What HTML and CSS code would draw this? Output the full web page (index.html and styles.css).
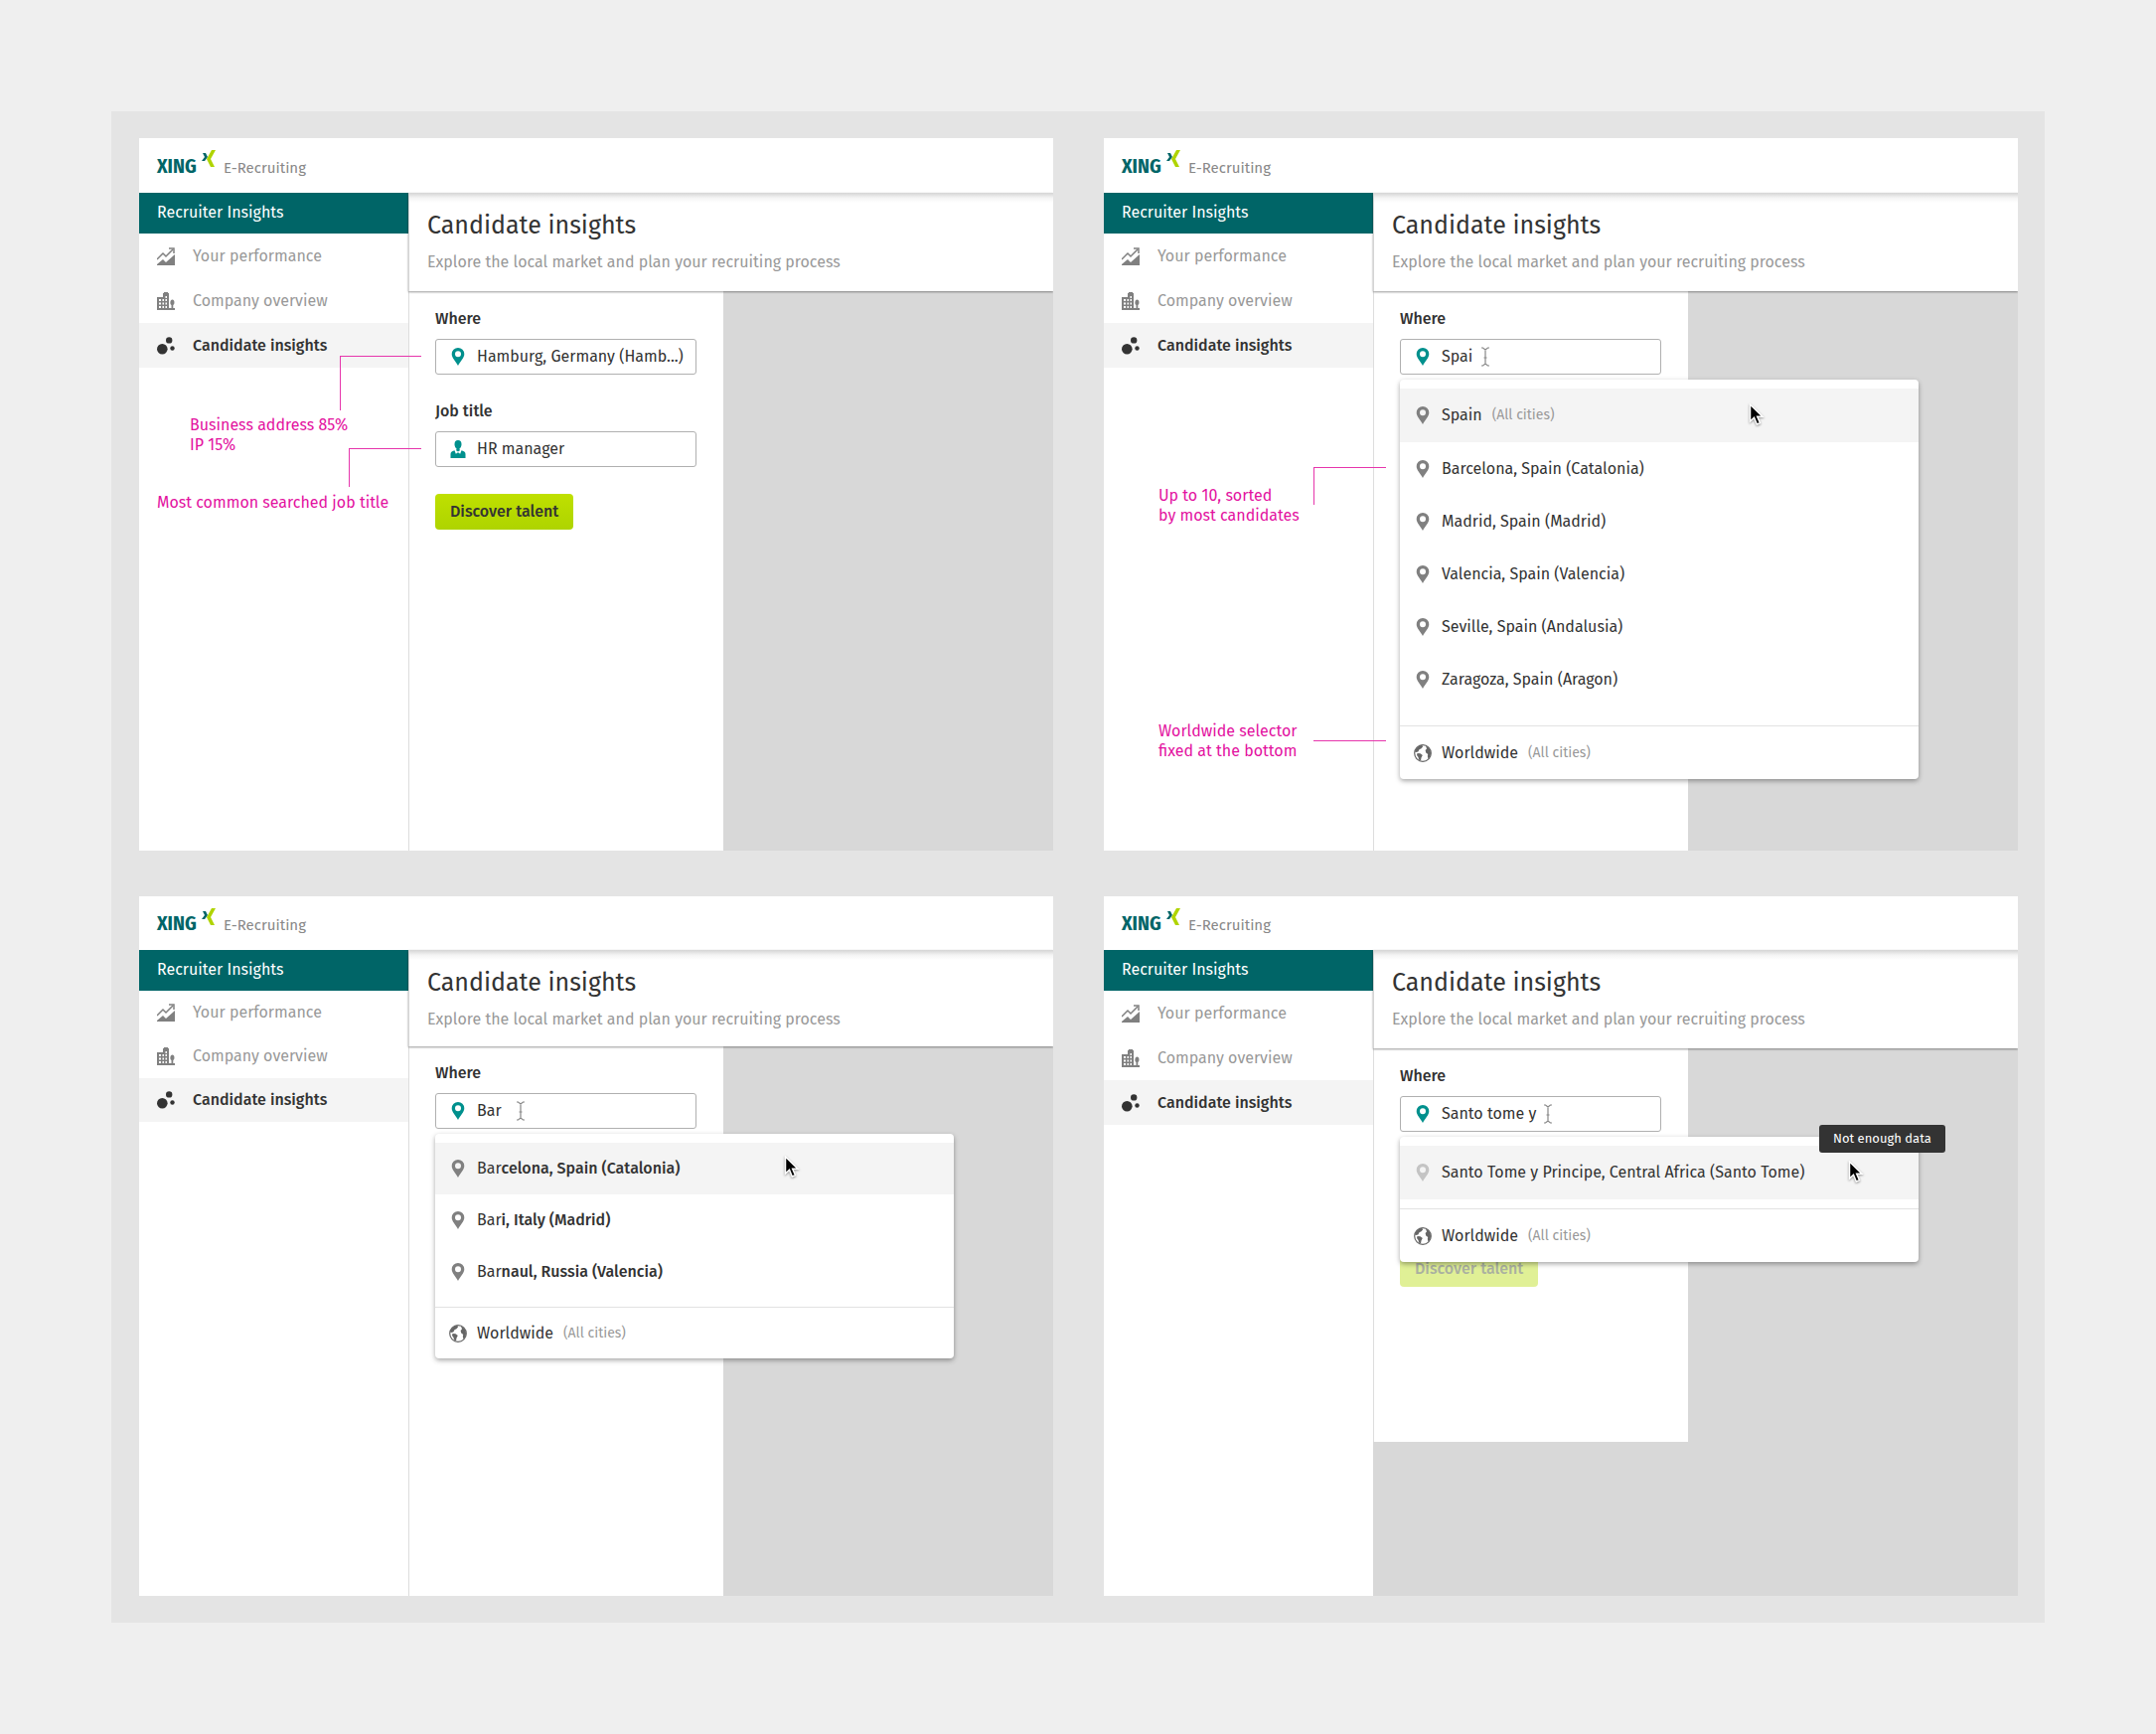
FILE: index.html
```html
<!DOCTYPE html>
<html lang="en">

<head>
    <meta charset="UTF-8">
    <meta name="viewport" content="width=device-width, initial-scale=1.0">
    <title>Candidate insights</title>
    <link rel="stylesheet" href="styles.css">
</head>

<body>
    <!-- shared icons -->
    <svg class="sprite" aria-hidden="true">
        <symbol id="icon-x" viewBox="0 0 14 17">
            <path d="M1 3h3l2 4-3 4H0l3-4z" fill="#006567" />
            <path d="M10 0h4L9 9l4 8H9L5 9z" fill="#b0d400" />
        </symbol>
        <symbol id="icon-chart" viewBox="0 0 18 18">
            <path d="M0 12l6-6 3 3 7-7" fill="none" stroke="currentColor" stroke-width="1.5" />
            <path d="M12 1h5v5" fill="none" stroke="currentColor" stroke-width="1.5" />
            <path d="M0 18v-1l6-5 3 3 9-8v11z" fill="currentColor" />
        </symbol>
        <symbol id="icon-company" viewBox="0 0 18 18">
            <path fill="currentColor" fill-rule="evenodd" d="M0 5h6V1h1V0h4v1h1v15h2.500v-3C12.800 12.500 13 7.500 15.500 7.500S18 12.500 16.300 13v3H18v2H0zM2 7v2h2V7zM2 10.500v2h2v-2zM2 14v2h2v-2zM5.500 7v2h1.500V7zM5.500 10.500v2H7v-2zM5.500 14v2H7v-2zM8.500 4v2H10V4zM8.500 7v2H10V7zM8.500 10.500v2H10v-2zM8.500 14v2H10v-2z" />
        </symbol>
        <symbol id="icon-dots" viewBox="0 0 18 18">
            <circle cx="5.300" cy="12.300" r="5.300" fill="currentColor" />
            <circle cx="12.200" cy="3.400" r="3.200" fill="currentColor" />
            <circle cx="15.500" cy="11.500" r="2.200" fill="currentColor" />
        </symbol>
        <symbol id="icon-pin" viewBox="0 0 13 18">
            <path fill="currentColor" fill-rule="evenodd" d="M6.500 0A6.300 6.300 0 0 0 .2 6.300C.2 10 4 13.500 6.500 18 9 13.500 12.800 10 12.800 6.300A6.300 6.300 0 0 0 6.500 0zM6.500 3.300a3 3 0 1 1 0 6 3 3 0 0 1 0-6z" />
        </symbol>
        <symbol id="icon-person" viewBox="0 0 16 18">
            <path fill="currentColor" d="M8 0c2.300 0 3.500 1.600 3.500 4S10 9 8 9 4.500 6.500 4.500 4 5.700 0 8 0z" />
            <path fill="currentColor" d="M.5 18v-4c0-2 1-2.800 4-3.800l1.300 3.500L8 12.300l2.200 1.400 1.300-3.500c3 1 4 1.800 4 3.800v4zM6.300 8.500h3.400v2L8 11.500l-1.700-1z" />
        </symbol>
        <symbol id="icon-globe" viewBox="0 0 18 18">
            <circle cx="9" cy="9" r="8.300" fill="#fff" stroke="currentColor" stroke-width="1.200" />
            <path fill="currentColor" d="M3 3.500C4.500 2 6 1 8 .8L9.200 2.200 7.500 4.200 5.500 5.300 4.300 7.500l-2 .5L1 7.500c.3-1.500 1-3 2-4z" />
            <path fill="currentColor" d="M3.500 9l3 .3 2.300 1.700-1.300 2.500L7 16.500l-2-1L4.500 13 3 11z" />
            <path fill="currentColor" d="M12 1.500C15 2.500 17 5.500 17 9c0 2.500-1 4.500-2.500 5.800L13.800 12l.4-2-2-1.500-.6-2.500L13 4.500z" />
        </symbol>
        <symbol id="icon-ibeam" viewBox="0 0 10 20">
            <path d="M1 1h1.500L5 3l2.500-2H9M5 3v14M1 19h1.500L5 17l2.500 2H9M3.500 11h3" fill="none" stroke="#888" stroke-width="1.200" />
        </symbol>
        <symbol id="icon-arrow" viewBox="0 0 16 24">
            <path d="M1.500 1v17l4-3.700L8.300 21l3.200-1.400-2.800-6.300h5.300z" fill="#000" stroke="#fff" stroke-width="1.500" />
        </symbol>
    </svg>

    <div class="board">
        <!-- prefilled search -->
        <section class="screen">
            <header class="topbar">
                <span class="brand">XING</span>
                <svg class="brand-mark"><use href="#icon-x" /></svg>
                <span class="product">E-Recruiting</span>
            </header>
            <div class="layout">
                <nav class="sidebar">
                    <h2 class="sidebar-title">Recruiter Insights</h2>
                    <a class="nav-item" href="#"><svg class="nav-icon"><use href="#icon-chart" /></svg>Your performance</a>
                    <a class="nav-item" href="#"><svg class="nav-icon"><use href="#icon-company" /></svg>Company overview</a>
                    <a class="nav-item active" href="#"><svg class="nav-icon"><use href="#icon-dots" /></svg>Candidate insights</a>
                </nav>
                <main class="content">
                    <div class="content-header">
                        <h1>Candidate insights</h1>
                        <p>Explore the local market and plan your recruiting process</p>
                    </div>
                    <form class="search-form">
                        <div class="field">
                            <label for="where-1">Where</label>
                            <div class="input-box">
                                <svg class="pin"><use href="#icon-pin" /></svg>
                                <input type="text" id="where-1" value="Hamburg, Germany (Hamb...)">
                            </div>
                        </div>
                        <div class="field">
                            <label for="job-1">Job title</label>
                            <div class="input-box">
                                <svg class="pin"><use href="#icon-person" /></svg>
                                <input type="text" id="job-1" value="HR manager">
                            </div>
                        </div>
                        <button type="button" class="discover-btn">Discover talent</button>
                    </form>
                </main>
            </div>
            <p class="note note-address">Business address 85%<br>IP 15%</p>
            <span class="leader leader-address"></span>
            <p class="note note-job">Most common searched job title</p>
            <span class="leader leader-job"></span>
        </section>

        <!-- country suggestions -->
        <section class="screen">
            <header class="topbar">
                <span class="brand">XING</span>
                <svg class="brand-mark"><use href="#icon-x" /></svg>
                <span class="product">E-Recruiting</span>
            </header>
            <div class="layout">
                <nav class="sidebar">
                    <h2 class="sidebar-title">Recruiter Insights</h2>
                    <a class="nav-item" href="#"><svg class="nav-icon"><use href="#icon-chart" /></svg>Your performance</a>
                    <a class="nav-item" href="#"><svg class="nav-icon"><use href="#icon-company" /></svg>Company overview</a>
                    <a class="nav-item active" href="#"><svg class="nav-icon"><use href="#icon-dots" /></svg>Candidate insights</a>
                </nav>
                <main class="content">
                    <div class="content-header">
                        <h1>Candidate insights</h1>
                        <p>Explore the local market and plan your recruiting process</p>
                    </div>
                    <form class="search-form">
                        <div class="field">
                            <label for="where-2">Where</label>
                            <div class="input-box">
                                <svg class="pin"><use href="#icon-pin" /></svg>
                                <input type="text" id="where-2" value="Spai">
                                <svg class="ibeam"><use href="#icon-ibeam" /></svg>
                            </div>
                            <div class="dropdown">
                                <ul class="options options-long">
                                    <li><button type="button" class="option hovered"><svg class="pin"><use href="#icon-pin" /></svg>Spain <small>(All cities)</small></button></li>
                                    <li><button type="button" class="option"><svg class="pin"><use href="#icon-pin" /></svg>Barcelona, Spain (Catalonia)</button></li>
                                    <li><button type="button" class="option"><svg class="pin"><use href="#icon-pin" /></svg>Madrid, Spain (Madrid)</button></li>
                                    <li><button type="button" class="option"><svg class="pin"><use href="#icon-pin" /></svg>Valencia, Spain (Valencia)</button></li>
                                    <li><button type="button" class="option"><svg class="pin"><use href="#icon-pin" /></svg>Seville, Spain (Andalusia)</button></li>
                                    <li><button type="button" class="option"><svg class="pin"><use href="#icon-pin" /></svg>Zaragoza, Spain (Aragon)</button></li>
                                </ul>
                                <button type="button" class="option worldwide"><svg class="pin"><use href="#icon-globe" /></svg>Worldwide <small>(All cities)</small></button>
                            </div>
                        </div>
                    </form>
                </main>
            </div>
            <p class="note note-sorted">Up to 10, sorted<br>by most candidates</p>
            <span class="leader leader-sorted"></span>
            <p class="note note-worldwide">Worldwide selector<br>fixed at the bottom</p>
            <span class="leader leader-worldwide"></span>
            <svg class="pointer pointer-country"><use href="#icon-arrow" /></svg>
        </section>

        <!-- city suggestions -->
        <section class="screen compact">
            <header class="topbar">
                <span class="brand">XING</span>
                <svg class="brand-mark"><use href="#icon-x" /></svg>
                <span class="product">E-Recruiting</span>
            </header>
            <div class="layout">
                <nav class="sidebar">
                    <h2 class="sidebar-title">Recruiter Insights</h2>
                    <a class="nav-item" href="#"><svg class="nav-icon"><use href="#icon-chart" /></svg>Your performance</a>
                    <a class="nav-item" href="#"><svg class="nav-icon"><use href="#icon-company" /></svg>Company overview</a>
                    <a class="nav-item active" href="#"><svg class="nav-icon"><use href="#icon-dots" /></svg>Candidate insights</a>
                </nav>
                <main class="content">
                    <div class="content-header">
                        <h1>Candidate insights</h1>
                        <p>Explore the local market and plan your recruiting process</p>
                    </div>
                    <form class="search-form">
                        <div class="field">
                            <label for="where-3">Where</label>
                            <div class="input-box">
                                <svg class="pin"><use href="#icon-pin" /></svg>
                                <input type="text" id="where-3" value="Bar">
                                <svg class="ibeam"><use href="#icon-ibeam" /></svg>
                            </div>
                            <div class="dropdown">
                                <ul class="options">
                                    <li><button type="button" class="option hovered"><svg class="pin"><use href="#icon-pin" /></svg><span>Bar<b>celona, Spain (Catalonia)</b></span></button></li>
                                    <li><button type="button" class="option"><svg class="pin"><use href="#icon-pin" /></svg><span>Bar<b>i, Italy (Madrid)</b></span></button></li>
                                    <li><button type="button" class="option"><svg class="pin"><use href="#icon-pin" /></svg><span>Bar<b>naul, Russia (Valencia)</b></span></button></li>
                                </ul>
                                <button type="button" class="option worldwide"><svg class="pin"><use href="#icon-globe" /></svg>Worldwide <small>(All cities)</small></button>
                            </div>
                        </div>
                    </form>
                </main>
            </div>
            <svg class="pointer pointer-city"><use href="#icon-arrow" /></svg>
        </section>

        <!-- not enough data -->
        <section class="screen">
            <header class="topbar">
                <span class="brand">XING</span>
                <svg class="brand-mark"><use href="#icon-x" /></svg>
                <span class="product">E-Recruiting</span>
            </header>
            <div class="layout">
                <nav class="sidebar">
                    <h2 class="sidebar-title">Recruiter Insights</h2>
                    <a class="nav-item" href="#"><svg class="nav-icon"><use href="#icon-chart" /></svg>Your performance</a>
                    <a class="nav-item" href="#"><svg class="nav-icon"><use href="#icon-company" /></svg>Company overview</a>
                    <a class="nav-item active" href="#"><svg class="nav-icon"><use href="#icon-dots" /></svg>Candidate insights</a>
                </nav>
                <main class="content">
                    <div class="content-header">
                        <h1>Candidate insights</h1>
                        <p>Explore the local market and plan your recruiting process</p>
                    </div>
                    <form class="search-form search-form-short">
                        <div class="field">
                            <label for="where-4">Where</label>
                            <div class="input-box">
                                <svg class="pin"><use href="#icon-pin" /></svg>
                                <input type="text" id="where-4" value="Santo tome y">
                                <svg class="ibeam ibeam-far"><use href="#icon-ibeam" /></svg>
                            </div>
                            <div class="dropdown">
                                <ul class="options">
                                    <li><button type="button" class="option hovered no-data"><svg class="pin"><use href="#icon-pin" /></svg>Santo Tome y Principe, Central Africa (Santo Tome)</button></li>
                                </ul>
                                <button type="button" class="option worldwide"><svg class="pin"><use href="#icon-globe" /></svg>Worldwide <small>(All cities)</small></button>
                            </div>
                        </div>
                        <button type="button" class="discover-btn" disabled>Discover talent</button>
                    </form>
                </main>
            </div>
            <span class="tooltip" role="tooltip">Not enough data</span>
            <svg class="pointer pointer-no-data"><use href="#icon-arrow" /></svg>
        </section>
    </div>
</body>

</html>
```
FILE: styles.css
```css
* {
    box-sizing: border-box;
}

body {
    margin: 0;
    padding: 112px;
    background: #efefef;
    color: #333;
    font-family: 'Fira Sans', 'Noto Sans', sans-serif;
    font-size: 16px;
    line-height: 20px;
}

h1,
h2,
p,
ul {
    margin: 0;
    padding: 0;
}

button,
input {
    font: inherit;
    color: inherit;
}

.sprite {
    position: absolute;
    width: 0;
    height: 0;
}

.board {
    display: grid;
    grid-template-columns: 1fr 1fr;
    gap: 46px 51px;
    padding: 27px 27px 27px 28px;
    background: #e4e4e4;
}

.screen {
    position: relative;
    display: flex;
    flex-direction: column;
    min-height: 704px;
    overflow: hidden;
    background: #fff;
}

.screen:nth-child(-n+2) {
    min-height: 717px;
}

/* top bar */
.topbar {
    display: flex;
    align-items: center;
    height: 55px;
    padding-left: 18px;
    background: #fff;
}

.brand {
    width: 41px;
    color: #006567;
    font-family: 'Fira Sans Condensed', 'Fira Sans', 'Noto Sans', sans-serif;
    font-size: 20px;
    font-weight: bold;
}

.brand-mark {
    width: 14px;
    height: 17px;
    margin: 0 8px 14px 4px;
}

.product {
    padding-top: 4px;
    color: #888;
    font-size: 15px;
}

.layout {
    display: flex;
    flex: 1;
    position: relative;
}

/* sidebar */
.sidebar {
    width: 271px;
    background: #fff;
}

.sidebar-title {
    padding: 10px 18px 11px;
    background: #006567;
    color: #fff;
    font-size: 16px;
    font-weight: normal;
}

.nav-item {
    display: flex;
    align-items: center;
    height: 45px;
    padding-left: 18px;
    gap: 18px;
    color: #999;
    text-decoration: none;
}

.nav-item.active {
    background: #f4f4f4;
    color: #333;
    font-weight: 500;
}

.nav-icon {
    width: 18px;
    height: 18px;
    color: #808080;
}

.active .nav-icon {
    color: #333;
}

/* content */
.content {
    display: flex;
    flex-direction: column;
    flex: 1;
    background: #d8d8d8;
}

.content-header {
    position: relative;
    height: 99px;
    padding: 17px 18px;
    background: linear-gradient(#d4d4d4, #f4f4f4 5px, #fff 10px);
    border-left: 1px solid #d4d4d4;
    box-shadow: 0 1px 2px rgba(0, 0, 0, 0.4);
}

.content-header h1 {
    margin-bottom: 11px;
    font-size: 25px;
    font-weight: normal;
    line-height: 32px;
}

.content-header p {
    color: #999;
}

.search-form {
    display: flex;
    flex-direction: column;
    align-items: flex-start;
    flex: 1;
    gap: 27px;
    width: 317px;
    padding: 18px 27px 18px 26px;
    background: #fff;
    border-left: 1px solid #ddd;
}

.search-form-short {
    flex: none;
    height: 396px;
}

.field {
    position: relative;
    width: 100%;
}

.field label {
    display: block;
    margin-bottom: 10px;
    font-weight: 500;
}

.input-box {
    position: relative;
    display: flex;
    align-items: center;
    height: 36px;
    padding-left: 13px;
    gap: 10px;
    border: 1px solid #b0b0b0;
    border-radius: 3px;
}

.input-box input {
    flex: 1;
    min-width: 0;
    padding: 0;
    border: none;
    outline: none;
    background: none;
}

.pin {
    flex: none;
    width: 18px;
    height: 18px;
    color: #808080;
}

.input-box .pin {
    color: #00908d;
}

.discover-btn {
    height: 36px;
    padding: 0 15px;
    background: linear-gradient(#bfe000, #aed400);
    border: none;
    border-radius: 4px;
    font-weight: 500;
}

.discover-btn:disabled {
    margin-top: 93px;
    background: #e0f096;
    color: #aab0a0;
}

/* suggestions */
.dropdown {
    position: absolute;
    z-index: 1;
    top: calc(100% + 5px);
    left: 0;
    width: 522px;
    background: #fff;
    border-radius: 4px;
    box-shadow: 0 2px 5px rgba(0, 0, 0, 0.35);
}

.options {
    padding: 9px 0;
    list-style: none;
}

.options-long {
    padding-bottom: 20px;
}

.option {
    display: flex;
    align-items: center;
    width: 100%;
    height: 53px;
    padding: 0 14px;
    gap: 10px;
    background: none;
    border: none;
    text-align: left;
}

.option.hovered {
    height: 54px;
    background: #f4f4f4;
}

.option b {
    font-weight: 500;
}

.option small {
    color: #999;
    font-size: 14px;
}

.option.worldwide {
    height: 54px;
    border-top: 1px solid #e2e2e2;
}

.worldwide .pin {
    color: #666;
}

.no-data .pin {
    color: #c4c4c4;
}

.tooltip {
    position: absolute;
    z-index: 2;
    top: 230px;
    left: 720px;
    padding: 4px 14px;
    background: #333;
    border-radius: 3px;
    color: #fff;
    font-size: 13px;
}

/* mouse pointers */
.ibeam {
    position: absolute;
    left: 80px;
    width: 10px;
    height: 20px;
}

.ibeam-far {
    left: 143px;
}

.pointer {
    position: absolute;
    z-index: 2;
    width: 16px;
    height: 24px;
    filter: drop-shadow(0 1px 1px rgba(0, 0, 0, 0.4));
}

.pointer-country {
    top: 267px;
    left: 649px;
}

.pointer-city {
    top: 261px;
    left: 649px;
}

.pointer-no-data {
    top: 266px;
    left: 749px;
}

/* annotations */
.note {
    position: absolute;
    color: #e3129f;
}

.leader {
    position: absolute;
    width: 73px;
    border-top: 1px solid #e636ac;
    border-left: 1px solid #e636ac;
}

.note-address {
    top: 279px;
    left: 51px;
}

.leader-address {
    top: 219px;
    left: 202px;
    width: 82px;
    height: 55px;
}

.note-job {
    top: 357px;
    left: 18px;
}

.leader-job {
    top: 312px;
    left: 211px;
    height: 39px;
}

.note-sorted {
    top: 350px;
    left: 55px;
}

.leader-sorted {
    top: 331px;
    left: 211px;
    height: 38px;
}

.note-worldwide {
    top: 587px;
    left: 55px;
}

.leader-worldwide {
    top: 606px;
    left: 211px;
}

/* tighter rows */
.screen:nth-child(n+3) .topbar {
    height: 54px;
}

.compact .nav-item {
    height: 44px;
}

.compact .content-header {
    height: 97px;
}

.compact .search-form {
    padding-top: 17px;
}

.compact .option {
    height: 52px;
}
```
